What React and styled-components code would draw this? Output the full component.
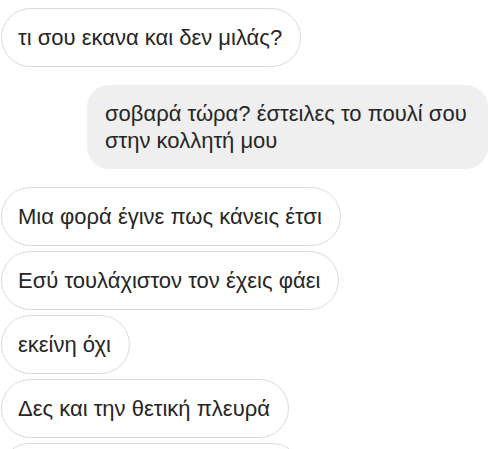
import React from "react";
import styled, { createGlobalStyle } from "styled-components";

const GlobalStyle = createGlobalStyle`
    html, body {
        margin: 0;
        padding: 0;
        background: #ffffff;
    }
    body {
        font-family: "Liberation Sans", Arial, "Noto Sans", sans-serif;
        color: #262626;
        -webkit-font-smoothing: antialiased;
    }
`;

const Thread = styled.div`
    display: flex;
    flex-direction: column;
    width: 500px;
    height: 449px;
    overflow: hidden;
    box-sizing: border-box;
    padding: 8px 12px 0 1px;
`;

const Group = styled.div`
    display: flex;
    flex-direction: column;
    align-items: ${({ $mine }) => ($mine ? "flex-end" : "flex-start")};
    gap: 5px;
    margin-bottom: 18px;
`;

const Bubble = styled.div`
    box-sizing: border-box;
    max-width: 401px;
    min-width: ${({ $empty }) => ($empty ? "300px" : "0")};
    min-height: 57px;
    padding: ${({ $mine }) => ($mine ? "15px 18px" : "15px 18px 15px 16px")};
    font-size: 22px;
    line-height: 27px;
    white-space: nowrap;
    ${({ $mine }) => $mine && "white-space: normal;"}
    border-radius: ${({ $mine }) => ($mine ? "22px" : "30px")};
    background: ${({ $mine }) => ($mine ? "#efefef" : "#ffffff")};
    border: ${({ $mine }) => ($mine ? "none" : "1px solid #dbdbdb")};
`;

const messages = [
    { mine: false, lines: ["τι σου εκανα και δεν μιλάς?"] },
    { mine: true, lines: ["σοβαρά τώρα? έστειλες το πουλί σου στην κολλητή μου"] },
    {
        mine: false,
        lines: [
            "Μια φορά έγινε πως κάνεις έτσι",
            "Εσύ τουλάχιστον τον έχεις φάει",
            "εκείνη όχι",
            "Δες και την θετική πλευρά",
            "",
        ],
    },
];

export default function App() {
    return (
        <>
            <GlobalStyle />
            <Thread>
                {messages.map((group, i) => (
                    <Group key={i} $mine={group.mine}>
                        {group.lines.map((text, j) => (
                            <Bubble key={j} $mine={group.mine} $empty={!text} aria-hidden={!text}>
                                {text}
                            </Bubble>
                        ))}
                    </Group>
                ))}
            </Thread>
        </>
    );
}
